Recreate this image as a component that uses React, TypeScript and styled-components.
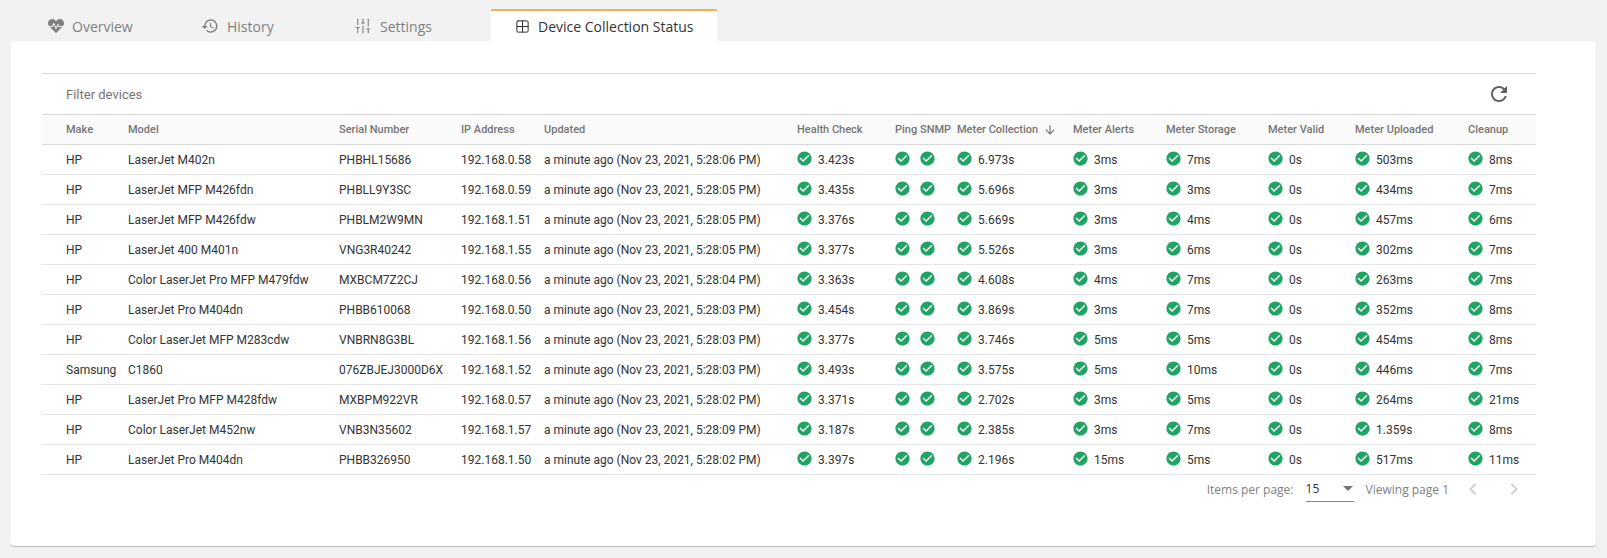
import React from 'react';
import styled, { createGlobalStyle } from 'styled-components';
import { FaHeartbeat } from 'react-icons/fa';
import { MdHistory, MdRefresh, MdArrowDownward, MdChevronLeft, MdChevronRight, MdCheckCircle } from 'react-icons/md';
import { SlidersVertical, Grid2x2 } from 'lucide-react';

const Global = createGlobalStyle`
  html, body { margin: 0; padding: 0; background: #f2f2f2; }
  body { font-family: Roboto, "Liberation Sans", sans-serif; }
`;

const Page = styled.div`
  width: 1607px;
  height: 558px;
  overflow: hidden;
  padding: 9px 10px 0;
  box-sizing: border-box;
`;

const Tabs = styled.div`
  display: flex;
  height: 32px;
  padding-left: 22px;
`;

const Tab = styled.div<{ $active?: boolean }>`
  width: ${p => (p.$active ? 226 : 153)}px;
  padding-left: ${p => (p.$active ? 24 : 16)}px;
  box-sizing: border-box;
  display: flex;
  align-items: center;
  gap: 8px;
  font: 14px "Open Sans", sans-serif;
  color: ${p => (p.$active ? '#333' : '#808080')};
  background: ${p => (p.$active ? '#fff' : 'transparent')};
  border-top: 2px solid ${p => (p.$active ? '#f6ae55' : 'transparent')};
`;

const Card = styled.div`
  width: 1586px;
  height: 505px;
  background: #fff;
  border-radius: 4px;
  box-shadow: 0 1px 1px rgba(0,0,0,.25);
  padding: 32px 60px 0 32px;
  box-sizing: border-box;
`;

const FilterBar = styled.div`
  height: 41px;
  border-top: 1px solid #d9d9d9;
  box-sizing: border-box;
  display: flex;
  align-items: center;
  justify-content: space-between;
  padding: 0 25px 0 24px;
  font-size: 13px;
  color: #757575;
`;

const cols = '62px 211px 122px 83px 253px 98px 25px 37px 116px 93px 102px 87px 113px 69px';

const HeaderRow = styled.div`
  display: grid;
  grid-template-columns: ${cols};
  height: 31px;
  box-sizing: border-box;
  padding-left: 24px;
  align-items: center;
  background: #fafafa;
  border-top: 1px solid #d9d9d9;
  border-bottom: 1px solid #d9d9d9;
  font-size: 11px;
  font-weight: 500;
  color: #757575;
  white-space: nowrap;
`;

const HeadCell = styled.div`
  display: flex;
  align-items: center;
  gap: 5px;
`;

const Row = styled.div`
  display: grid;
  grid-template-columns: ${cols};
  height: 30px;
  box-sizing: border-box;
  padding-left: 24px;
  align-items: center;
  border-bottom: 1px solid #e5e5e5;
  font-size: 12px;
  color: #333;
  white-space: nowrap;
`;

const Status = styled.div`
  display: flex;
  align-items: center;
  gap: 5px;
`;

const Check = styled(MdCheckCircle)`
  font-size: 17px;
  color: #1fa463;
  margin-left: -1px;
  margin-top: -3px;
  flex: none;
`;

const Footer = styled.div`
  display: flex;
  justify-content: flex-end;
  align-items: center;
  height: 28px;
  font: 12px "Open Sans", sans-serif;
  color: #808080;
`;

const Select = styled.div`
  width: 48px;
  height: 25px;
  margin: 0 12px 0 12px;
  border-bottom: 1px solid #8a8a8a;
  color: #333;
  display: flex;
  align-items: center;
  justify-content: space-between;
  padding-right: 1px;
  box-sizing: border-box;
`;

const Caret = styled.span`
  width: 0;
  height: 0;
  border-left: 5px solid transparent;
  border-right: 5px solid transparent;
  border-top: 5px solid #757575;
`;

const Pager = styled.div`
  display: flex;
  align-items: center;
  color: #d0d0d0;
  font-size: 24px;
  gap: 17px;
  margin-left: 12px;
  padding-right: 10px;
`;

const RefreshIcon = styled(MdRefresh)`
  font-size: 24px;
  color: #616161;
`;

const data: string[][] = [
  ['HP','LaserJet M402n','PHBHL15686','192.168.0.58','a minute ago (Nov 23, 2021, 5:28:06 PM)','3.423s','6.973s','3ms','7ms','0s','503ms','8ms'],
  ['HP','LaserJet MFP M426fdn','PHBLL9Y3SC','192.168.0.59','a minute ago (Nov 23, 2021, 5:28:05 PM)','3.435s','5.696s','3ms','3ms','0s','434ms','7ms'],
  ['HP','LaserJet MFP M426fdw','PHBLM2W9MN','192.168.1.51','a minute ago (Nov 23, 2021, 5:28:05 PM)','3.376s','5.669s','3ms','4ms','0s','457ms','6ms'],
  ['HP','LaserJet 400 M401n','VNG3R40242','192.168.1.55','a minute ago (Nov 23, 2021, 5:28:05 PM)','3.377s','5.526s','3ms','6ms','0s','302ms','7ms'],
  ['HP','Color LaserJet Pro MFP M479fdw','MXBCM7Z2CJ','192.168.0.56','a minute ago (Nov 23, 2021, 5:28:04 PM)','3.363s','4.608s','4ms','7ms','0s','263ms','7ms'],
  ['HP','LaserJet Pro M404dn','PHBB610068','192.168.0.50','a minute ago (Nov 23, 2021, 5:28:03 PM)','3.454s','3.869s','3ms','7ms','0s','352ms','8ms'],
  ['HP','Color LaserJet MFP M283cdw','VNBRN8G3BL','192.168.1.56','a minute ago (Nov 23, 2021, 5:28:03 PM)','3.377s','3.746s','5ms','5ms','0s','454ms','8ms'],
  ['Samsung','C1860','076ZBJEJ3000D6X','192.168.1.52','a minute ago (Nov 23, 2021, 5:28:03 PM)','3.493s','3.575s','5ms','10ms','0s','446ms','7ms'],
  ['HP','LaserJet Pro MFP M428fdw','MXBPM922VR','192.168.0.57','a minute ago (Nov 23, 2021, 5:28:02 PM)','3.371s','2.702s','3ms','5ms','0s','264ms','21ms'],
  ['HP','Color LaserJet M452nw','VNB3N35602','192.168.1.57','a minute ago (Nov 23, 2021, 5:28:09 PM)','3.187s','2.385s','3ms','7ms','0s','1.359s','8ms'],
  ['HP','LaserJet Pro M404dn','PHBB326950','192.168.1.50','a minute ago (Nov 23, 2021, 5:28:02 PM)','3.397s','2.196s','15ms','5ms','0s','517ms','11ms'],
];

const heads = ['Make','Model','Serial Number','IP Address','Updated','Health Check','Ping','SNMP'];
const heads2 = ['Meter Alerts','Meter Storage','Meter Valid','Meter Uploaded','Cleanup'];

const StatusCell = ({ value }: { value?: string }) => (
  <Status><Check />{value}</Status>
);

export default function App() {
  return (
    <Page>
      <Global />
      <Tabs>
        <Tab><FaHeartbeat size={16} />Overview</Tab>
        <Tab><MdHistory size={18} />History</Tab>
        <Tab><SlidersVertical size={18} strokeWidth={1.5} />Settings</Tab>
        <Tab $active><Grid2x2 size={15} strokeWidth={1.6} />Device Collection Status</Tab>
      </Tabs>
      <Card>
        <FilterBar>Filter devices<RefreshIcon /></FilterBar>
        <HeaderRow>
          {heads.map(h => <HeadCell key={h}>{h}</HeadCell>)}
          <HeadCell>Meter Collection<MdArrowDownward size={14} /></HeadCell>
          {heads2.map(h => <HeadCell key={h}>{h}</HeadCell>)}
        </HeaderRow>
        {data.map(d => (
          <Row key={d[2]}>
            <div>{d[0]}</div>
            <div>{d[1]}</div>
            <div>{d[2]}</div>
            <div>{d[3]}</div>
            <div>{d[4]}</div>
            <StatusCell value={d[5]} />
            <StatusCell />
            <StatusCell />
            {d.slice(6).map((v, i) => <StatusCell key={i} value={v} />)}
          </Row>
        ))}
        <Footer>
          Items per page:
          <Select>15<Caret /></Select>
          Viewing page 1
          <Pager><MdChevronLeft /><MdChevronRight /></Pager>
        </Footer>
      </Card>
    </Page>
  );
}
